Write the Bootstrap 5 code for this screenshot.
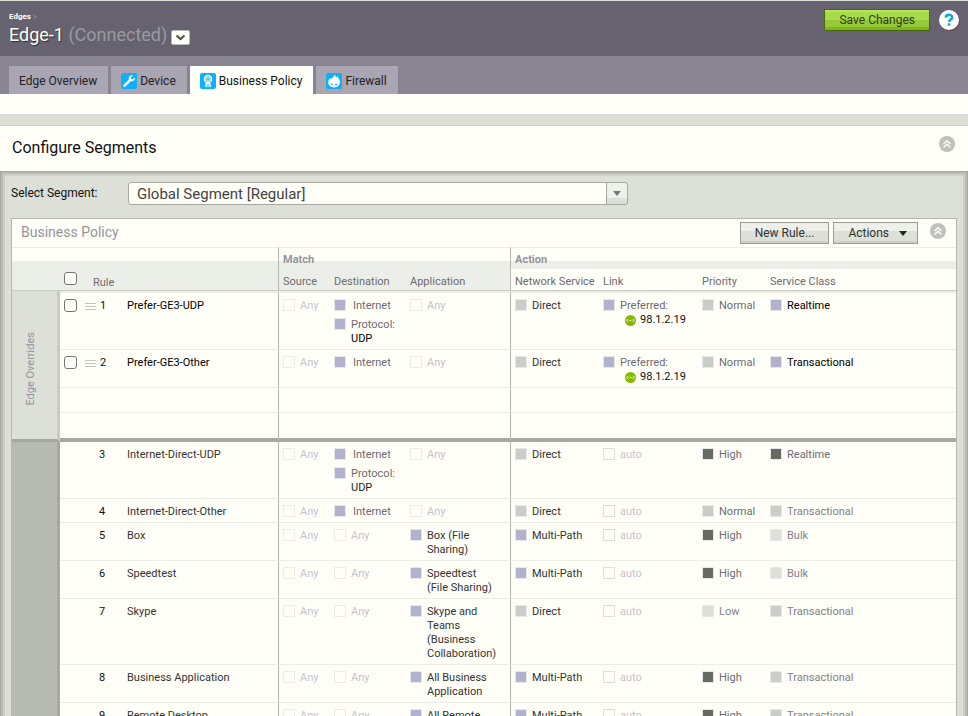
<!DOCTYPE html>
<html lang="en">
<head>
<meta charset="utf-8">
<meta name="viewport" content="width=device-width, initial-scale=1">
<title>Edge-1 Business Policy</title>
<link href="https://cdn.jsdelivr.net/npm/bootstrap@5.3.0/dist/css/bootstrap.min.css" rel="stylesheet">
<style>
:root{--paper:#fffff8;--sage:#dce0d7;--line:#ebeee7;--mid:#c8ccc3;--rule:#b4b8af;--dark:#a6a99f}
body{font-family:Roboto,"Liberation Sans",sans-serif;font-size:11px;line-height:14px;color:#111;background:var(--sage)}
a{color:inherit;text-decoration:none}
.topbar{background:#666270;border-top:1px solid var(--sage);height:56px;padding:8px 8px 0 9px}
.crumb{font-size:8px;line-height:16px;font-weight:700;color:#fff}
.crumb span{color:#999;font-weight:400}
.edge-name{font-size:18px;line-height:20px;font-weight:400;color:#fff;text-shadow:1px 1px 1px #333}
.edge-state{color:#999aa0;text-shadow:none}
.mini-btn{width:19px;height:15px;padding:0;border:1px solid #bbb;border-radius:2px;background:var(--paper);line-height:0;margin-top:5px}
.btn-flat{font-size:12px;line-height:20px;height:22px;padding:0 14px;border-radius:0;color:#333}
.btn-save{border:1px solid #4b6411;background:linear-gradient(#b5e655 0 2px,#a9da4c 2px 10px,#96c936 10px 17px,#7fb61c 17px);color:#2f3b14}
.btn-save:hover{background:#a9da4c}
.btn-grey{border:1px solid #999c93;background:linear-gradient(#eef0ea 0 8px,var(--sage) 8px 18px,#cdd1c8 18px)}
.btn-grey:hover{background:var(--sage)}
.btn-menu{gap:10px;padding-right:10px}
.round-btn{padding:0;border:0;background:none;line-height:0}
.tabbar{background:#888492;height:38px;padding:10px 9px 0;gap:3px}
.tab-link{display:flex;align-items:center;gap:3px;height:28px;padding:1px 11px 0 10px;font-size:12px;color:#222;background:#a9a5b3}
.tab-link:hover{color:#000}
.tab-link.active{background:var(--paper);color:#111}
.strip{background:var(--paper);height:21px;border-bottom:1px solid #dcd9e6}
.seg-head{background:var(--paper);border-top:1px solid #d4ccd6;margin-top:10px;height:46px;padding:0 13px 2px 12px}
.seg-head h2{font-size:16px;line-height:20px;font-weight:400;margin:0;color:#111}
.frame{padding:11px 11px 0;box-shadow:inset 0 0 0 1px #a9a6a5,inset 0 0 0 3px #b8bbb2,inset 0 0 0 5px #cbcfc6;min-height:560px}
.seg-label{width:109px;font-size:12px;padding-bottom:2px}
.seg-select{max-width:500px;height:23px;border:1px solid #a6a99f;border-radius:3px;padding:0 30px 0 8px;font-size:15px;line-height:20px;color:#444;
 background:url("data:image/svg+xml,%3Csvg xmlns='http://www.w3.org/2000/svg' viewBox='0 0 8 5'%3E%3Cpath d='M0 0h8L4 5z' fill='%23777'/%3E%3C/svg%3E") right 6px center/8px 5px no-repeat,
 linear-gradient(#a6a99f,#a6a99f) right 20px top/1px 100% no-repeat,
 linear-gradient(#eef0ea 0 15px,var(--sage) 15px) right top/20px 100% no-repeat,var(--paper)}
.panel{border:1px solid var(--rule);background:var(--paper);margin-top:13px}
.panel-head{height:28px;padding:0 10px 0 9px}
.panel-head h3{font-size:14px;line-height:18px;font-weight:400;color:#96949c;margin:0 auto 2px 0}
.rules{table-layout:fixed;border-collapse:separate;border-spacing:0;--bs-table-bg:transparent;font-size:11px}
.rules>*>tr>*{padding:6px 0 3px 4px;border-bottom:1px solid var(--line);line-height:14px;color:#333}
.rules>thead>tr>th{font-weight:400;color:#6c6a72;border:0}
.rules>thead>tr.groups>th{padding-top:5px;padding-bottom:2px;border-top:1px solid var(--line);font-weight:700;color:#96949c;background:linear-gradient(var(--paper) 13px,#ecefe8 13px)}
.rules>thead>tr.heads>th{padding:6px 0 1px 4px;border-bottom:1px solid var(--mid);background:#ecefe8}
.rules>thead>tr.heads>th.act{background:var(--paper)}
.rules>tbody:first-of-type>tr:first-child>*{border-top:2px solid var(--line)}
.rules .vl{border-left:1px solid var(--rule)!important}
.rules>tbody>tr>.gutter{background:var(--sage);border-right:3px solid var(--mid);border-bottom:3px solid var(--dark);border-top:0!important;padding:0 8px 0 0;vertical-align:middle;text-align:center}
.rules>tbody>tr>.gutter-dark{background:#b8bbb2;border-right:3px solid var(--dark);padding:0;border-bottom:0}
.upright{writing-mode:vertical-rl;transform:rotate(180deg);color:#96949c;margin-top:12px;display:inline-block}
.rules>tbody>tr.spacer>td{height:25px}
.rules>tbody>tr.divider>td{border-bottom:4px solid var(--dark);height:29px}
.rules>tbody>tr>td.own{color:#000}
.num{width:8px;color:#111}
.tick{appearance:none;width:13px;height:13px;border:1px solid #767676;border-radius:3px;background:var(--paper);margin:0 0 1px;flex:none}
.heads .tick{margin-bottom:5px}
.heads .d-flex{height:16px;margin-top:-2px}
.tick:checked{background:#767676}
.grip{width:11px;height:7px;border-top:1px solid #c2c5bd;border-bottom:1px solid #c2c5bd;background:linear-gradient(#c2c5bd,#c2c5bd) center/100% 1px no-repeat}
.item{display:flex;gap:5px;color:#333}
.item+.item{margin-top:5px}
.item::before{content:"";flex:none;width:12px;height:12px;border:1px solid #e6e7e8;background:var(--paper)}
.item.lilac::before{background:#b2b2cf}
.item.grey::before{background:#cbcec6}
.item.pale::before{background:var(--sage)}
.item.deep::before{background:#666a60}
.item.none{color:#c6c2cd}
.item.none::before{border-color:#ebeee7}
.item.auto::before{border-color:#dcdfda}
.item.auto{color:#c6c2cd}
.soft{color:#6c6a72}
.faint{color:#85808a}
.strong-ink{color:#000}
.nudge{padding-left:2px}
.ip{color:#111;white-space:nowrap;gap:4px;padding-left:5px}
</style>
<script src="https://cdn.jsdelivr.net/npm/bootstrap@5.3.0/dist/js/bootstrap.bundle.min.js"></script>
</head>
<body class="vh-100 overflow-hidden">
<svg class="d-none" aria-hidden="true">
 <symbol id="collapse" viewBox="0 0 16 16"><circle cx="8" cy="8" r="8" fill="#bfc2ba"/><path d="M4.500 8 8 4.700 11.500 8M4.500 11.500 8 8.200l3.500 3.300" fill="none" stroke="#fffff8" stroke-width="1.400"/></symbol>
 <symbol id="linkdot" viewBox="0 0 11 11"><circle cx="5.500" cy="5.500" r="5.500" fill="#86b800"/><path d="M3 3.800 1.500 5.500 3 7.200M8 3.800 9.500 5.500 8 7.200" fill="none" stroke="#e9f5b8"/><path d="M3.500 5.500h1M5 5.500h1M6.500 5.500h1" stroke="#e9f5b8"/></symbol>
</svg>

<header class="topbar d-flex justify-content-between align-items-start">
 <div>
  <div class="crumb"><a href="#">Edges</a> <span>&gt;</span></div>
  <div class="d-flex gap-1">
   <h1 class="edge-name mb-0">Edge-1 <span class="edge-state">(Connected)</span></h1>
   <button class="mini-btn" type="button" aria-label="Switch edge"><svg width="11" height="7" viewBox="0 0 11 7"><path d="m1.500 1.500 4 3.500 4-3.500" fill="none" stroke="#555" stroke-width="2.200"/></svg></button>
  </div>
 </div>
 <div class="d-flex align-items-center gap-2">
  <button class="btn btn-flat btn-save" type="button">Save Changes</button>
  <button class="round-btn" type="button" aria-label="Help"><svg width="22" height="22" viewBox="0 0 22 22"><circle cx="12" cy="12" r="10" fill="#6b4a50"/><circle cx="11" cy="11" r="10" fill="#fff"/><path d="M7.800 8.600C7.900 4.800 14.200 5 14.200 8.400c0 2.200-3.100 2.100-3.100 4.600" fill="none" stroke="#0fa8dc" stroke-width="2.500"/><path d="M9.800 14.300h2.600v2.400H9.800z" fill="#0fa8dc"/></svg></button>
 </div>
</header>

<nav class="tabbar d-flex" aria-label="Edge sections">
 <a class="tab-link" href="#">Edge Overview</a>
 <a class="tab-link" href="#"><svg width="16" height="16" viewBox="0 0 16 16"><rect width="16" height="16" rx="2" fill="#0fb0f8"/><path d="M3.500 12.700 9 7.300" stroke="#fff" stroke-width="2.400" stroke-linecap="round"/><path d="M12 2.300 9.900 4.500l.3 1.500 1.600.3 2-2.100c.6 2.500-1.300 4.500-3.800 4.100L7.600 6.600C7.200 3.800 9.500 1.700 12 2.300z" fill="#fff"/></svg>Device</a>
 <a class="tab-link active" href="#" aria-current="page"><svg width="16" height="16" viewBox="0 0 16 16"><rect width="16" height="16" rx="2" fill="#0fb0f8"/><path d="M6 9 4.800 14.300l1.900-1L8 14.500l1.300-1.200 1.900 1L10 9z" fill="#fff"/><circle cx="8" cy="6" r="3.600" fill="#6fd0fb" stroke="#fff" stroke-width="1.300"/><circle cx="8" cy="6" r="1.500" fill="#0fb0f8" stroke="#fff" stroke-width=".6"/><path d="M8 11v3" stroke="#0fb0f8"/></svg>Business Policy</a>
 <a class="tab-link" href="#"><svg width="16" height="16" viewBox="0 0 16 16"><rect width="16" height="16" rx="2" fill="#0fb0f8"/><path d="M8.900 1.500c.2 1.300.8 2.200 1.600 3l1.200-1.700c0 1 .3 1.700.8 2.400.8 1.200 1.600 2.500 1.400 4.300-.3 2.900-2.400 4.900-5.800 4.900s-5.700-2.100-5.900-4.900c-.1-1.800.8-3.200 2-4.500l.5 1.200C5.900 4.900 8.200 4 8.900 1.500z" fill="#fff"/><path d="m5.200 10.500.3 1.500 1-.8.6 1.200M10.900 10.500l-.3 1.500-1-.8-.6 1.200" fill="none" stroke="#0fb0f8" stroke-width=".9"/></svg>Firewall</a>
</nav>
<div class="strip"></div>

<main>
 <div class="seg-head d-flex align-items-center justify-content-between">
  <h2>Configure Segments</h2>
  <button class="round-btn pb-2" type="button" aria-label="Collapse segments"><svg width="16" height="16"><use href="#collapse"/></svg></button>
 </div>
 <div class="frame">
  <div class="d-flex align-items-center">
   <label class="seg-label" for="segment">Select Segment:</label>
   <select class="seg-select form-select ms-2" id="segment"><option>Global Segment [Regular]</option></select>
  </div>

  <section class="panel">
   <div class="panel-head d-flex align-items-center">
    <h3>Business Policy</h3>
    <button class="btn btn-flat btn-grey" type="button">New Rule...</button>
    <button class="btn btn-flat btn-grey btn-menu ms-1 d-flex align-items-center" type="button">Actions <svg width="8" height="5" viewBox="0 0 8 5"><path d="M0 0h8L4 5z" fill="#222"/></svg></button>
    <button class="round-btn ms-2 ps-1 pb-1" type="button" aria-label="Collapse policy"><svg width="16" height="16"><use href="#collapse"/></svg></button>
   </div>
   <table class="rules table mb-0">
    <colgroup><col style="width:48px"><col style="width:63px"><col style="width:155px"><col style="width:52px"><col style="width:76px"><col style="width:104px"><col style="width:89px"><col style="width:99px"><col style="width:68px"><col></colgroup>
    <thead>
     <tr class="groups"><th colspan="3"></th><th class="vl" colspan="3">Match</th><th class="vl" colspan="4">Action</th></tr>
     <tr class="heads"><th></th><th colspan="2"><div class="d-flex align-items-center"><input class="tick" type="checkbox" aria-label="Select all rules"><span class="ms-3 pt-1">Rule</span></div></th><th class="vl">Source</th><th>Destination</th><th>Application</th><th class="act vl">Network Service</th><th class="act">Link</th><th class="act">Priority</th><th class="act">Service Class</th></tr>
    </thead>
    <tbody>
     <tr><th class="gutter fw-normal" rowspan="4" scope="rowgroup"><span class="upright">Edge Overrides</span></th>
      <td><div class="d-flex align-items-center"><input class="tick" type="checkbox" aria-label="Select rule 1"><span class="grip ms-2"></span><span class="num ms-1">1</span></div></td><td class="own">Prefer-GE3-UDP</td>
      <td class="vl"><div class="item none">Any</div></td><td><div class="item lilac soft"><span class="nudge">Internet</span></div><div class="item lilac soft"><div>Protocol:<br><span class="strong-ink">UDP</span></div></div></td><td><div class="item none">Any</div></td>
      <td class="vl"><div class="item grey">Direct</div></td><td><div class="item lilac soft"><div>Preferred:<div class="ip d-flex align-items-center"><svg width="11" height="11"><use href="#linkdot"/></svg>98.1.2.19</div></div></div></td><td><div class="item grey soft">Normal</div></td><td><div class="item lilac strong-ink">Realtime</div></td></tr>
     <tr><td><div class="d-flex align-items-center"><input class="tick" type="checkbox" aria-label="Select rule 2"><span class="grip ms-2"></span><span class="num ms-1">2</span></div></td><td class="own">Prefer-GE3-Other</td>
      <td class="vl"><div class="item none">Any</div></td><td><div class="item lilac soft"><span class="nudge">Internet</span></div></td><td><div class="item none">Any</div></td>
      <td class="vl"><div class="item grey">Direct</div></td><td><div class="item lilac soft"><div>Preferred:<div class="ip d-flex align-items-center"><svg width="11" height="11"><use href="#linkdot"/></svg>98.1.2.19</div></div></div></td><td><div class="item grey soft">Normal</div></td><td><div class="item lilac strong-ink">Transactional</div></td></tr>
     <tr class="spacer"><td></td><td></td><td class="vl"></td><td></td><td></td><td class="vl"></td><td></td><td></td><td></td></tr>
     <tr class="divider"><td></td><td></td><td class="vl"></td><td></td><td></td><td class="vl"></td><td></td><td></td><td></td></tr>
    </tbody>
    <tbody>
     <tr><td class="gutter-dark" rowspan="7"></td><td><div class="num ms-auto me-3">3</div></td><td>Internet-Direct-UDP</td>
      <td class="vl"><div class="item none">Any</div></td><td><div class="item lilac soft"><span class="nudge">Internet</span></div><div class="item lilac soft"><div>Protocol:<br><span class="text-dark">UDP</span></div></div></td><td><div class="item none">Any</div></td>
      <td class="vl"><div class="item grey">Direct</div></td><td><div class="item auto">auto</div></td><td><div class="item deep soft">High</div></td><td><div class="item deep soft">Realtime</div></td></tr>
     <tr><td><div class="num ms-auto me-3">4</div></td><td>Internet-Direct-Other</td>
      <td class="vl"><div class="item none">Any</div></td><td><div class="item lilac soft"><span class="nudge">Internet</span></div></td><td><div class="item none">Any</div></td>
      <td class="vl"><div class="item grey">Direct</div></td><td><div class="item auto">auto</div></td><td><div class="item grey soft">Normal</div></td><td><div class="item grey faint">Transactional</div></td></tr>
     <tr><td><div class="num ms-auto me-3">5</div></td><td>Box</td>
      <td class="vl"><div class="item none">Any</div></td><td><div class="item none">Any</div></td><td><div class="item lilac"><span>Box (File<br>Sharing)</span></div></td>
      <td class="vl"><div class="item lilac">Multi-Path</div></td><td><div class="item auto">auto</div></td><td><div class="item deep soft">High</div></td><td><div class="item pale faint">Bulk</div></td></tr>
     <tr><td><div class="num ms-auto me-3">6</div></td><td>Speedtest</td>
      <td class="vl"><div class="item none">Any</div></td><td><div class="item none">Any</div></td><td><div class="item lilac"><span>Speedtest<br>(File Sharing)</span></div></td>
      <td class="vl"><div class="item lilac">Multi-Path</div></td><td><div class="item auto">auto</div></td><td><div class="item deep soft">High</div></td><td><div class="item pale faint">Bulk</div></td></tr>
     <tr><td><div class="num ms-auto me-3">7</div></td><td>Skype</td>
      <td class="vl"><div class="item none">Any</div></td><td><div class="item none">Any</div></td><td><div class="item lilac"><span>Skype and<br>Teams<br>(Business<br>Collaboration)</span></div></td>
      <td class="vl"><div class="item grey">Direct</div></td><td><div class="item auto">auto</div></td><td><div class="item pale faint">Low</div></td><td><div class="item grey faint">Transactional</div></td></tr>
     <tr><td><div class="num ms-auto me-3">8</div></td><td>Business Application</td>
      <td class="vl"><div class="item none">Any</div></td><td><div class="item none">Any</div></td><td><div class="item lilac"><span>All Business<br>Application</span></div></td>
      <td class="vl"><div class="item lilac">Multi-Path</div></td><td><div class="item auto">auto</div></td><td><div class="item deep soft">High</div></td><td><div class="item grey faint">Transactional</div></td></tr>
     <tr><td><div class="num ms-auto me-3">9</div></td><td>Remote Desktop</td>
      <td class="vl"><div class="item none">Any</div></td><td><div class="item none">Any</div></td><td><div class="item lilac"><span>All Remote<br>Desktop</span></div></td>
      <td class="vl"><div class="item lilac">Multi-Path</div></td><td><div class="item auto">auto</div></td><td><div class="item deep soft">High</div></td><td><div class="item grey faint">Transactional</div></td></tr>
    </tbody>
   </table>
  </section>
 </div>
</main>
</body>
</html>
